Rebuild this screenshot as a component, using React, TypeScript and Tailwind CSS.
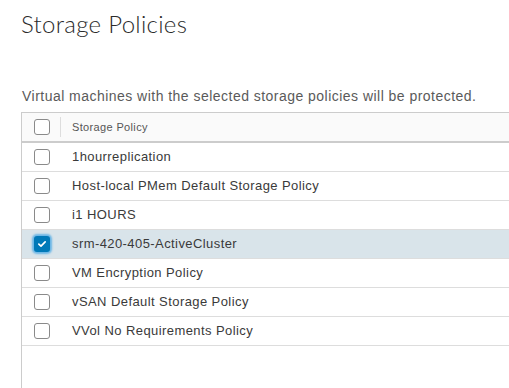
import React from 'react';

const policies = [
    { name: '1hourreplication', checked: false },
    { name: 'Host-local PMem Default Storage Policy', checked: false },
    { name: 'i1 HOURS', checked: false },
    { name: 'srm-420-405-ActiveCluster', checked: true },
    { name: 'VM Encryption Policy', checked: false },
    { name: 'vSAN Default Storage Policy', checked: false },
    { name: 'VVol No Requirements Policy', checked: false },
];

const Checkbox: React.FC<{ checked?: boolean }> = ({ checked }) =>
    checked ? (
        <div className="w-4 h-4 rounded-[3px] bg-[#0079b8] flex items-center justify-center shadow-[0_0_2px_2px_#6bb6e6]">
            <svg viewBox="0 0 12 12" className="w-[10px] h-[10px]">
                <path d="M2.2 6.2 L4.8 8.6 L9.8 3.4" fill="none" stroke="#fff" strokeWidth="2" strokeLinecap="round" strokeLinejoin="round" />
            </svg>
        </div>
    ) : (
        <div className="w-4 h-4 rounded-[3px] border border-[#8a8a8a] bg-white" />
    );

export default function App() {
    return (
        <div className="w-[509px] h-[388px] overflow-hidden bg-white font-['Liberation_Sans',Arial,sans-serif] text-[#3a3a3a]">
            <h1 className="pl-[21px] pt-[9px] text-[24px] leading-[30px] font-light font-['Lato','Open_Sans',sans-serif] tracking-[0.3px] text-[#2b2b2b]">
                Storage Policies
            </h1>
            <p className="pl-[22px] mt-[48px] text-[14px] leading-[18px] tracking-[0.47px] text-[#5a5a5a]">
                Virtual machines with the selected storage policies will be protected.
            </p>
            <div className="ml-[21px] mt-[7px] w-[520px] h-[400px] border-l border-t border-[#cccccc]">
                <div className="flex h-[30px] bg-[#fafafa] border-b-2 border-[#cccccc]">
                    <div className="w-[38px] flex items-center justify-center pl-[2px]">
                        <Checkbox />
                    </div>
                    <div className="my-[4px] border-l border-[#dddddd]" />
                    <div className="flex items-center pl-[11px] text-[11px] tracking-[0.35px] text-[#565656]">Storage Policy</div>
                </div>
                {policies.map((p, i) => (
                    <div
                        key={i}
                        className={`flex h-[29px] border-b border-[#dddddd] ${p.checked ? 'bg-[#d9e4ea]' : 'bg-white'}`}
                    >
                        <div className="w-[38px] flex items-center justify-center pl-[2px]">
                            <Checkbox checked={p.checked} />
                        </div>
                        <div className="flex items-center pl-[12px] text-[13px] tracking-[0.42px] text-[#3a3a3a]">{p.name}</div>
                    </div>
                ))}
            </div>
        </div>
    );
}
